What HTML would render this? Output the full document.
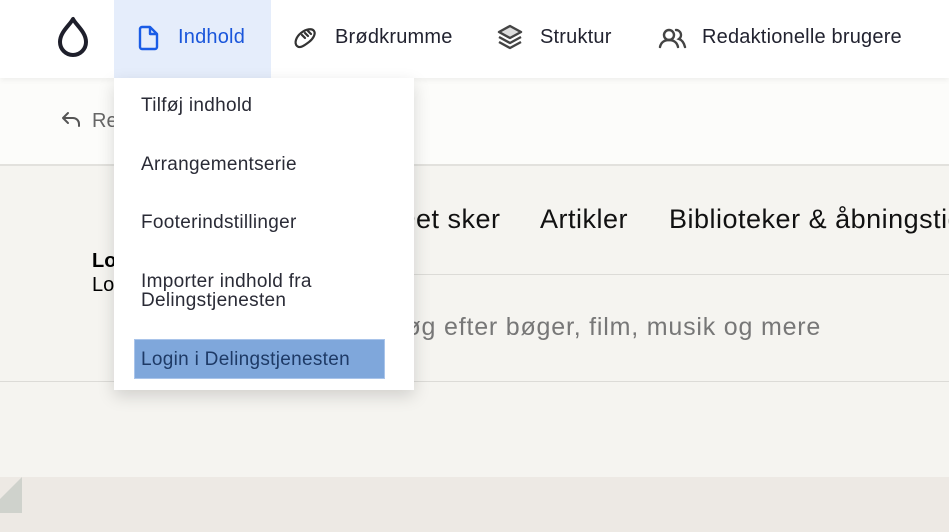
<!DOCTYPE html>
<html><head><meta charset="utf-8"><style>
*{margin:0;padding:0;box-sizing:border-box}
body{width:949px;height:532px;overflow:hidden;position:relative;background:#f5f4f0;font-family:"Liberation Sans",sans-serif}
.top{position:absolute;left:0;top:0;width:949px;height:78px;background:#fff;z-index:3;box-shadow:0 2px 6px rgba(0,0,0,.06)}
.band{position:absolute;left:0;top:78px;width:949px;height:88px;background:#fcfcfa;border-bottom:2px solid #e2e1dd}
.abs{position:absolute;white-space:nowrap}
.n{font-size:20px;letter-spacing:.2px;top:26px}
.c{font-size:27px;letter-spacing:.5px;color:#111;top:204px}
.dd{position:absolute;left:114px;top:78px;width:300px;height:312px;background:#fff;z-index:4;box-shadow:0 6px 16px rgba(0,0,0,.15)}
.dd .it{position:absolute;left:27px;font-size:19px;letter-spacing:.3px;color:#2a2b36;line-height:18px}
</style></head><body>
<div class="band"></div>
<svg class="abs" style="left:60px;top:110px" width="24" height="20" viewBox="0 0 24 20"><path d="M8 3 3 8l5 5M3 8h10a6 6 0 0 1 6 6v2" fill="none" stroke="#555" stroke-width="2" stroke-linecap="round" stroke-linejoin="round"/></svg>
<div class="abs" style="left:92px;top:110px;font-size:20px;color:#666">Re</div>
<div class="abs c" style="left:396px">Det sker</div>
<div class="abs c" style="left:540px">Artikler</div>
<div class="abs c" style="left:669px">Biblioteker &amp; åbningstider</div>
<div class="abs" style="left:92px;top:250px;font-size:20px;font-weight:bold;color:#000">Lo</div>
<div class="abs" style="left:92px;top:274px;font-size:20px;color:#000">Lo</div>
<div class="abs" style="left:414px;top:274px;width:535px;height:1px;background:#dcdbd7"></div>
<div class="abs" style="left:388px;top:313px;font-size:25px;letter-spacing:.8px;color:#777">Søg efter bøger, film, musik og mere</div>
<div class="abs" style="left:0;top:381px;width:949px;height:1px;background:#dcdbd7"></div>
<div class="abs" style="left:0;top:477px;width:949px;height:55px;background:#ede9e4"></div>
<svg class="abs" style="left:0;top:477px" width="22" height="36"><polygon points="22,0 22,36 0,36 0,22" fill="#cfd2cc"/></svg>
<div class="top">
<svg class="abs" style="left:56px;top:16px" width="34" height="42" viewBox="0 0 34 42"><path d="M17 3C14 9 4 16 4 26a13 13 0 0 0 26 0C30 16 20 9 17 3Z" fill="none" stroke="#1e1f2b" stroke-width="4" stroke-linejoin="round"/></svg>
<div class="abs" style="left:114px;top:0;width:157px;height:78px;background:#e5edfb"></div>
<svg class="abs" style="left:137px;top:25px" width="24" height="26" viewBox="0 0 24 26"><path d="M3 4a2 2 0 0 1 2-2h8l7 7v13a2 2 0 0 1-2 2H5a2 2 0 0 1-2-2Z M13 2v7h7" fill="none" stroke="#1a5ce6" stroke-width="2.4" stroke-linejoin="round"/></svg>
<div class="abs n" style="left:178px;color:#1a56db">Indhold</div>
<svg class="abs" style="left:292px;top:25px" width="26" height="26" viewBox="0 0 26 26"><g fill="none" stroke="#333" stroke-width="2.2" stroke-linecap="round"><path d="M5 21c-3-3-1-9 4-13s11-5 13-2-1 8-5 11-9 7-12 4Z"/><path d="M10 10l3 3M13 8l3 3M16 6l3 3"/></g></svg>
<div class="abs n" style="left:335px;color:#222330">Brødkrumme</div>
<svg class="abs" style="left:496px;top:23px" width="28" height="28" viewBox="0 0 28 28"><g stroke="#444" stroke-width="2.4" stroke-linejoin="round"><path d="M14 3 25 9 14 15 3 9Z" fill="#ddd"/><path d="M3 14l11 6 11-6M3 19l11 6 11-6" fill="none"/></g></svg>
<div class="abs n" style="left:540px;color:#222330">Struktur</div>
<svg class="abs" style="left:658px;top:27px" width="30" height="22" viewBox="0 0 30 22"><g fill="none" stroke="#444" stroke-width="2.4" stroke-linecap="round"><circle cx="11" cy="8" r="5"/><path d="M2 20c1-5 5-7 9-7s8 2 9 7"/><path d="M18 3a5 5 0 0 1 3 9c3 1 5 4 6 8"/></g></svg>
<div class="abs n" style="left:702px;color:#222330">Redaktionelle brugere</div>
</div>
<div class="dd">
<div class="it" style="top:19px">Tilføj indhold</div>
<div class="it" style="top:78px">Arrangementserie</div>
<div class="it" style="top:136px">Footerindstillinger</div>
<div class="it" style="top:195px">Importer indhold fra</div>
<div class="it" style="top:214px">Delingstjenesten</div>
<div class="abs" style="left:20px;top:261px;width:251px;height:40px;background:#7fa7db;border:1px solid #a9c4ea"></div>
<div class="it" style="top:273px;color:#1e3a66">Login i Delingstjenesten</div>
</div>
</body></html>
